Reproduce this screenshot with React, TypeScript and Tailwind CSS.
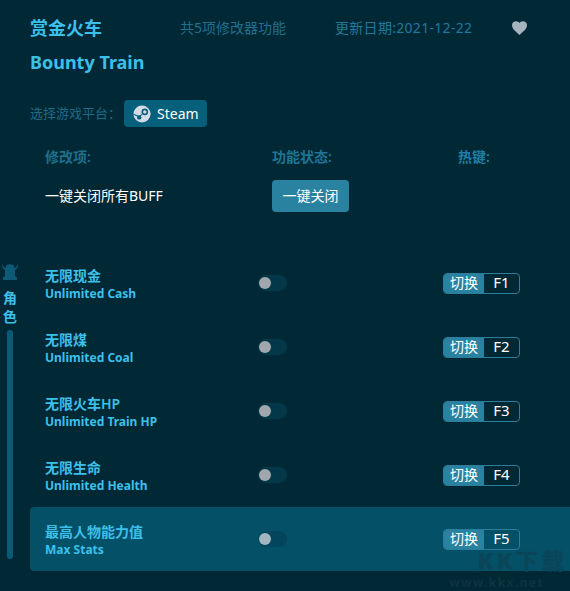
import React from "react";

const font = { fontFamily: '"Noto Sans", "Noto Sans CJK SC", sans-serif' };

const rows = [
  { zh: "无限现金", en: "Unlimited Cash", key: "F1" },
  { zh: "无限煤", en: "Unlimited Coal", key: "F2" },
  { zh: "无限火车HP", en: "Unlimited Train HP", key: "F3" },
  { zh: "无限生命", en: "Unlimited Health", key: "F4" },
  { zh: "最高人物能力值", en: "Max Stats", key: "F5", active: true },
];

function SteamIcon() {
  return (
    <svg width="18" height="18" viewBox="0 0 18 18">
      <circle cx="9" cy="9" r="8.5" fill="#d3dce6" />
      <path d="M0.5 10.5 L5.5 12.6 L7.5 10 L11 6.5 L13 3 L17.5 8 L17 10 L11.5 11.5 L8.5 14 L5 14.5 L1.5 12.5 Z" fill="#d3dce6" />
      <circle cx="11.8" cy="6.9" r="3.3" fill="#06607c" />
      <circle cx="11.8" cy="6.9" r="1.7" fill="#d3dce6" />
      <circle cx="6.2" cy="12.4" r="2.2" fill="#06607c" />
      <path d="M0.5 9.2 L6 11.6 L9 9.4" stroke="#06607c" strokeWidth="1.1" fill="none" />
    </svg>
  );
}

function Row({ zh, en, k, active }: { zh: string; en: string; k: string; active?: boolean }) {
  return (
    <div className={`flex h-16 items-center rounded-l pl-[15px] ${active ? "bg-[#045067]" : ""}`}>
      <div className="w-[213px] pt-[2px] text-[#3cc0ea]">
        <div className="text-sm leading-[19px] font-semibold">{zh}</div>
        <div className="text-xs leading-[17px] font-bold">{en}</div>
      </div>
      <div className={`flex h-4 w-[29px] items-center rounded-full ${active ? "bg-[#03455a]" : "bg-[#03384a]"}`}>
        <div className={`ml-px size-3 rounded-full ${active ? "bg-[#a2b6c0]" : "bg-[#a1a8ad]"}`} />
      </div>
      <div className="ml-[156px] flex h-[21px] w-[77px] overflow-hidden rounded border border-[#2a7d9c] text-sm text-white">
        <div className="flex w-10 items-center justify-center bg-[#2a82a1]">切换</div>
        <div className="flex flex-1 items-center justify-center text-[15px]">{k}</div>
      </div>
    </div>
  );
}

export default function App() {
  return (
    <div style={font} className="relative h-[591px] w-[570px] overflow-hidden bg-[#012835]">
      <header className="flex h-[40px] items-end pl-[30px]">
        <h1 className="w-[150px] text-lg leading-[24px] font-bold text-[#3cc0ea]">赏金火车</h1>
        <span className="w-[155px] text-sm leading-[24px] text-[#226f8c]">共5项修改器功能</span>
        <span className="w-[177px] text-sm leading-[24px] tracking-[0.3px] text-[#22789a]">更新日期:2021-12-22</span>
        <svg className="mb-[5px]" width="15" height="14" viewBox="0 0 24 22">
          <path d="M12 22 C8 18 0 13 0 6.5 C0 2.5 3 0 6.5 0 C9 0 11 1.2 12 3 C13 1.2 15 0 17.5 0 C21 0 24 2.5 24 6.5 C24 13 16 18 12 22 Z" fill="#a5b4bf" />
        </svg>
      </header>
      <h2 className="mt-[10px] pl-[30px] text-lg leading-[25px] font-bold text-[#3cc0ea]">Bounty Train</h2>

      <div className="mt-[25px] flex h-[27px] items-center pl-[30px]">
        <span className="w-[94px] text-[13px] text-[#1f6a87]">选择游戏平台：</span>
        <div className="flex h-[27px] w-[83px] items-center gap-[6px] rounded bg-[#06607c] pl-[9px] text-sm text-white">
          <SteamIcon />
          Steam
        </div>
      </div>

      <div className="mt-[12px] flex h-[36px] items-center pl-[45px] text-sm font-semibold">
        <span className="w-[227px] text-[#1f6f8d]">修改项:</span>
        <span className="w-[186px] text-[#1f7595]">功能状态:</span>
        <span className="text-[#1f7fa1]">热键:</span>
      </div>

      <div className="mt-[5px] flex h-[32px] items-center pl-[45px]">
        <span className="w-[227px] text-sm text-white">一键关闭所有BUFF</span>
        <button className="h-8 w-[77px] rounded bg-[#2a82a1] text-sm text-white">一键关闭</button>
      </div>

      <div className="mt-[39px] flex">
        <aside className="flex w-[30px] flex-col items-center pr-[10px] pt-[12px]">
          <svg width="18" height="18" viewBox="0 0 18 18">
            <path d="M1 1 Q2 4 4.5 5 L5.5 2 Q9 0.5 12.5 2 L13.5 5 Q16 4 17 1 Q17.5 5 14 7 L14 13 L16 14.5 L16 17 L2 17 L2 14.5 L4 13 L4 7 Q0.5 5 1 1 Z" fill="#0c5a75" />
          </svg>
          <div className="mt-[7px] text-sm leading-[19px] font-semibold text-[#3cc0ea]">角</div>
          <div className="text-sm leading-[19px] font-semibold text-[#3cc0ea]">色</div>
          <div className="mt-[4px] h-[229px] w-[6px] rounded-full bg-[#0b5b76]" />
        </aside>
        <div className="flex-1">
          {rows.map((r) => (
            <Row key={r.key} zh={r.zh} en={r.en} k={r.key} active={r.active} />
          ))}
        </div>
      </div>

      <div className="absolute right-[2px] top-[550px] text-[22px] leading-[20px] font-black tracking-[4px] text-[#0a4559]">KK下载</div>
      <div className="absolute bottom-0 right-[26px] text-xs font-bold tracking-[1.4px] text-[#0e3340]">www.kkx.net</div>
    </div>
  );
}
